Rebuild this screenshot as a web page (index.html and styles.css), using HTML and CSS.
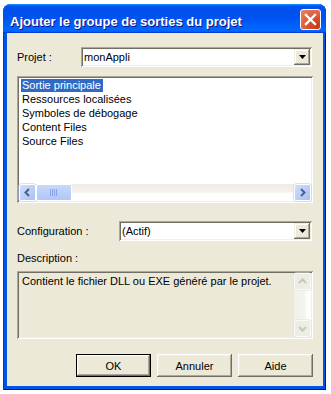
FILE: index.html
```html
<!DOCTYPE html>
<html lang="fr">
<head>
  <meta charset="UTF-8" />
  <title>Ajouter le groupe de sorties du projet</title>
  <link rel="stylesheet" href="styles.css">
</head>
<body>
  <div class="window">
    <div class="titlebar">
      <span class="title">Ajouter le groupe de sorties du projet</span>
      <span class="close">
        <svg width="21" height="21" viewBox="0 0 21 21">
          <path d="M6 6 L15 15 M15 6 L6 15" stroke="#fff" stroke-width="2.4" stroke-linecap="square" />
        </svg>
      </span>
    </div>

    <div class="client">
      <div class="field-row">
        <span class="label label-projet">Projet :</span>
        <div class="combo">
          <span class="combo-value">monAppli</span>
          <span class="drop">
            <svg width="7" height="4" viewBox="0 0 7 4"><path d="M0 0 H7 L3.5 4 Z" fill="#000" /></svg>
          </span>
        </div>
      </div>

      <div class="listview">
        <ul class="items">
          <li><span class="selected">Sortie principale</span></li>
          <li><span>Ressources localisées</span></li>
          <li><span>Symboles de débogage</span></li>
          <li><span>Content Files</span></li>
          <li><span>Source Files</span></li>
        </ul>
        <div class="hscroll">
          <span class="sbtn">
            <svg width="15" height="15" viewBox="0 0 15 15"><path d="M9 4 L5.5 7.5 L9 11" fill="none" stroke="#4d6185" stroke-width="2" /></svg>
          </span>
          <span class="track">
            <span class="thumb">
              <svg width="8" height="7" viewBox="0 0 8 7"><path d="M0.5 0 V7 M2.5 0 V7 M4.5 0 V7 M6.5 0 V7" stroke="#8aa5e6" stroke-width="1" /></svg>
            </span>
          </span>
          <span class="sbtn">
            <svg width="15" height="15" viewBox="0 0 15 15"><path d="M6 4 L9.5 7.5 L6 11" fill="none" stroke="#4d6185" stroke-width="2" /></svg>
          </span>
        </div>
      </div>

      <div class="field-row row-config">
        <span class="label label-config">Configuration :</span>
        <div class="combo">
          <span class="combo-value">(Actif)</span>
          <span class="drop">
            <svg width="7" height="4" viewBox="0 0 7 4"><path d="M0 0 H7 L3.5 4 Z" fill="#000" /></svg>
          </span>
        </div>
      </div>

      <div class="desc-label">Description :</div>
      <div class="desc">
        <p class="desc-text">Contient le fichier DLL ou EXE généré par le projet.</p>
        <div class="vscroll">
          <span class="sbtn off">
            <svg width="15" height="15" viewBox="0 0 15 15"><path d="M4 9 L7.5 5.5 L11 9" fill="none" stroke="#c9c7ba" stroke-width="2" /></svg>
          </span>
          <span class="vtrack"></span>
          <span class="sbtn off">
            <svg width="15" height="15" viewBox="0 0 15 15"><path d="M4 6 L7.5 9.5 L11 6" fill="none" stroke="#c9c7ba" stroke-width="2" /></svg>
          </span>
        </div>
      </div>

      <div class="buttons">
        <span class="btn default">OK</span>
        <span class="btn">Annuler</span>
        <span class="btn">Aide</span>
      </div>
    </div>
  </div>
</body>
</html>
```

FILE: styles.css
```css
body {
  margin: 0;
  background: #fff;
  font-family: "Liberation Sans", Arial, sans-serif;
  font-size: 11px;
  color: #000;
}
.window {
  margin: 4px 0 0 3px;
  width: 323px;
  height: 386px;
  display: flex;
  flex-direction: column;
  background: #0055e5;
  border-radius: 8px 8px 0 0;
  box-shadow: inset 1px 0 #0831d9, inset -1px 0 #00138c, inset 0 -1px #00138c;
  overflow: hidden;
}
.titlebar {
  height: 29px;
  flex: none;
  display: flex;
  align-items: flex-start;
  justify-content: space-between;
  padding: 5px 5px 0 7px;
  box-sizing: border-box;
  background: linear-gradient(180deg, #0997ff, #0053ee 8%, #0050ee 40%, #06f 88%, #06f 93%, #005bff 95%, #003dd7 96%, #003dd7);
}
.title {
  margin-top: 5px;
  line-height: 15px;
  font-size: 13px;
  font-weight: bold;
  color: #fff;
  text-shadow: 1px 1px #0f1089;
}
.close {
  width: 21px;
  height: 21px;
  box-sizing: border-box;
  border: 1px solid #fff;
  border-radius: 3px;
  background: radial-gradient(circle at 85% 85%, #c43a15 0%, #dd5630 45%, #e9876a 100%);
  display: flex;
}
.close svg {
  margin: -1px;
}
.client {
  flex: 1;
  margin: 0 3px 4px 4px;
  background: #ece9d8;
  padding: 14px 10px 0 10px;
  display: flex;
  flex-direction: column;
}

.field-row {
  display: flex;
  align-items: center;
  height: 20px;
}
.label-projet {
  width: 64px;
  flex: none;
}
.label-config {
  width: 102px;
  flex: none;
}
.combo {
  flex: 1;
  height: 20px;
  margin-right: 1px;
  box-sizing: border-box;
  background: #fff;
  display: flex;
  align-items: center;
  padding: 2px 2px 2px 3px;
  box-shadow: inset 1px 1px #aca899, inset -1px -1px #fff, inset 2px 2px #716f64, inset -2px -2px #f1efe2;
}
.combo-value {
  flex: 1;
  line-height: 14px;
}
.drop {
  width: 16px;
  height: 16px;
  background: #ece9d8;
  display: flex;
  align-items: center;
  justify-content: center;
  box-shadow: inset -1px -1px #716f64, inset 1px 1px #f1efe2, inset -2px -2px #aca899, inset 2px 2px #fff;
}

.listview {
  margin-top: 9px;
  height: 127px;
  box-sizing: border-box;
  padding: 2px;
  background: #fff;
  display: flex;
  flex-direction: column;
  box-shadow: inset 1px 1px #aca899, inset -1px -1px #fff, inset 2px 2px #716f64, inset -2px -2px #f1efe2;
}
.items {
  flex: 1;
  list-style: none;
  margin: 0;
  padding: 1px 0 0 2px;
}
.items li {
  height: 13px;
  line-height: 13px;
  margin-bottom: 1px;
}
.items span {
  padding: 0 2px 0 1px;
  display: inline-block;
}
.items .selected {
  background: #316ac5;
  color: #fff;
}

.hscroll {
  height: 17px;
  display: flex;
  background: linear-gradient(180deg, #eeede5 0%, #f3f1ea 45%, #fdfdfa 55%, #fefefe 100%);
}
.sbtn {
  width: 17px;
  height: 17px;
  flex: none;
  box-sizing: border-box;
  border: 1px solid #fff;
  border-radius: 2px;
  background: linear-gradient(135deg, #d0dcfd 0%, #bacdf8 60%, #a9bff2 100%);
  box-shadow: 0 0 0 0.5px #b6c8f2;
  display: flex;
  align-items: center;
  justify-content: center;
}
.track {
  flex: 1;
  display: flex;
}
.thumb {
  width: 36px;
  height: 17px;
  box-sizing: border-box;
  border: 1px solid #fff;
  border-radius: 2px;
  background: linear-gradient(180deg, #c9d8fc 0%, #bccff8 50%, #b2c7f5 100%);
  display: flex;
  align-items: center;
  justify-content: center;
}

.row-config {
  margin-top: 18px;
}
.desc-label {
  margin-top: 11px;
  line-height: 13px;
}
.desc {
  margin-top: 6px;
  height: 68px;
  box-sizing: border-box;
  padding: 2px;
  display: flex;
  box-shadow: inset 1px 1px #aca899, inset -1px -1px #fff, inset 2px 2px #716f64, inset -2px -2px #f1efe2;
}
.desc-text {
  flex: 1;
  margin: 0;
  padding: 2px 0 0 3px;
  line-height: 13px;
}
.vscroll {
  width: 17px;
  display: flex;
  flex-direction: column;
  background: linear-gradient(90deg, #f3f1ea 0%, #f4f3ee 60%, #fdfdfa 75%, #fefefe 100%);
}
.vtrack {
  flex: 1;
}
.sbtn.off {
  background: #eeede5;
  border-color: #fafaf7;
  box-shadow: 0 0 0 0.5px #e2e0d4;
}

.buttons {
  margin-top: 15px;
  display: flex;
  justify-content: flex-end;
  gap: 6px;
}
.btn {
  width: 75px;
  height: 23px;
  box-sizing: border-box;
  display: flex;
  align-items: center;
  justify-content: center;
  background: #ece9d8;
  box-shadow: inset -1px -1px #716f64, inset 1px 1px #fff, inset -2px -2px #aca899, inset 2px 2px #f1efe2;
}
.btn.default {
  box-shadow: inset 0 0 0 1px #000, inset -2px -2px #716f64, inset 2px 2px #fff, inset -3px -3px #aca899, inset 3px 3px #f1efe2;
}
```
